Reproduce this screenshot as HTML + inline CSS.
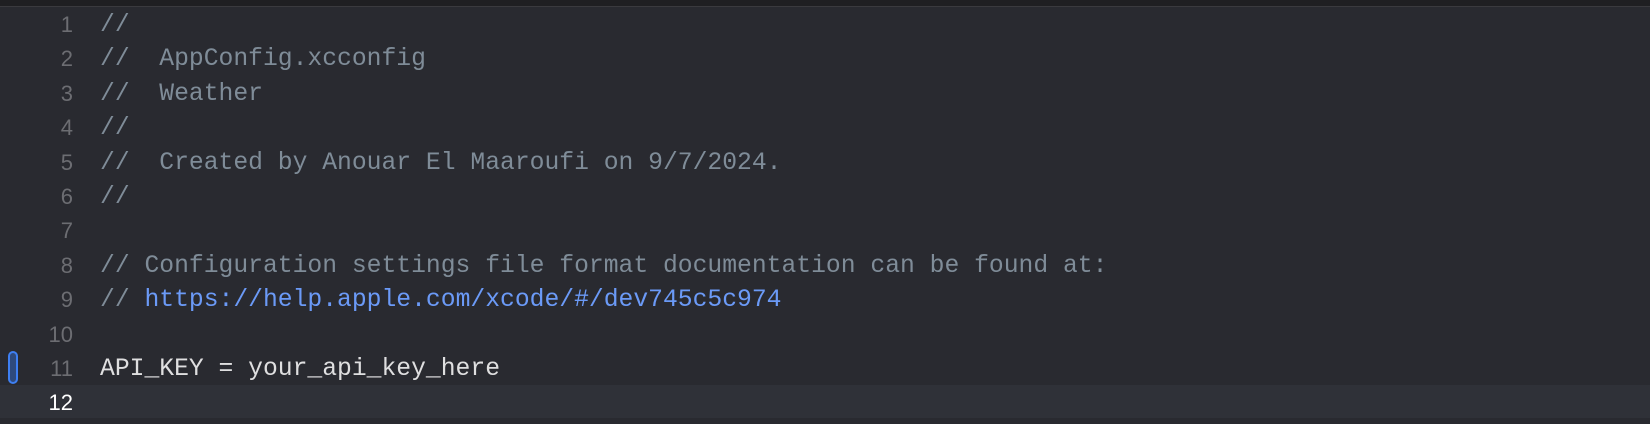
<!DOCTYPE html>
<html><head><style>
html,body{margin:0;padding:0}
body{width:1650px;height:424px;background:#292a30;position:relative;overflow:hidden}
.top{position:absolute;left:0;top:0;width:1650px;height:6px;background:#1f1f22;border-bottom:1px solid #3a3a3e}
.ln{position:absolute;left:0;width:73px;text-align:right;font-family:"Liberation Sans",sans-serif;font-size:22px;color:#6c6d72;line-height:34.4px}
.code{position:absolute;left:100px;font-family:"Liberation Mono",monospace;font-size:24.7px;line-height:34.4px;white-space:pre;color:#dfdfe0}
.c{color:#7f8c98}.u{color:#6b9af7}
.cur{position:absolute;left:0;top:385px;width:1650px;height:33px;background:#2f3138}
.mk{position:absolute;left:8px;top:351px;width:6px;height:29px;border:2px solid #3e7ff2;border-radius:5px;background:#2e4a7d}
</style></head><body>
<div class="top"></div>
<div class="cur"></div>
<div class="mk"></div>
<div class="ln" style="top:8px">1<br>2<br>3<br>4<br>5<br>6<br>7<br>8<br>9<br>10<br>11<br><span style="color:#fff">12</span></div>
<div class="code" style="top:8px"><span class="c">//
//  AppConfig.xcconfig
//  Weather
//
//  Created by Anouar El Maaroufi on 9/7/2024.
//

// Configuration settings file format documentation can be found at:
// <span class="u">https://help.apple.com/xcode/#/dev745c5c974</span></span>

API_KEY = your_api_key_here
</div>
</body></html>
